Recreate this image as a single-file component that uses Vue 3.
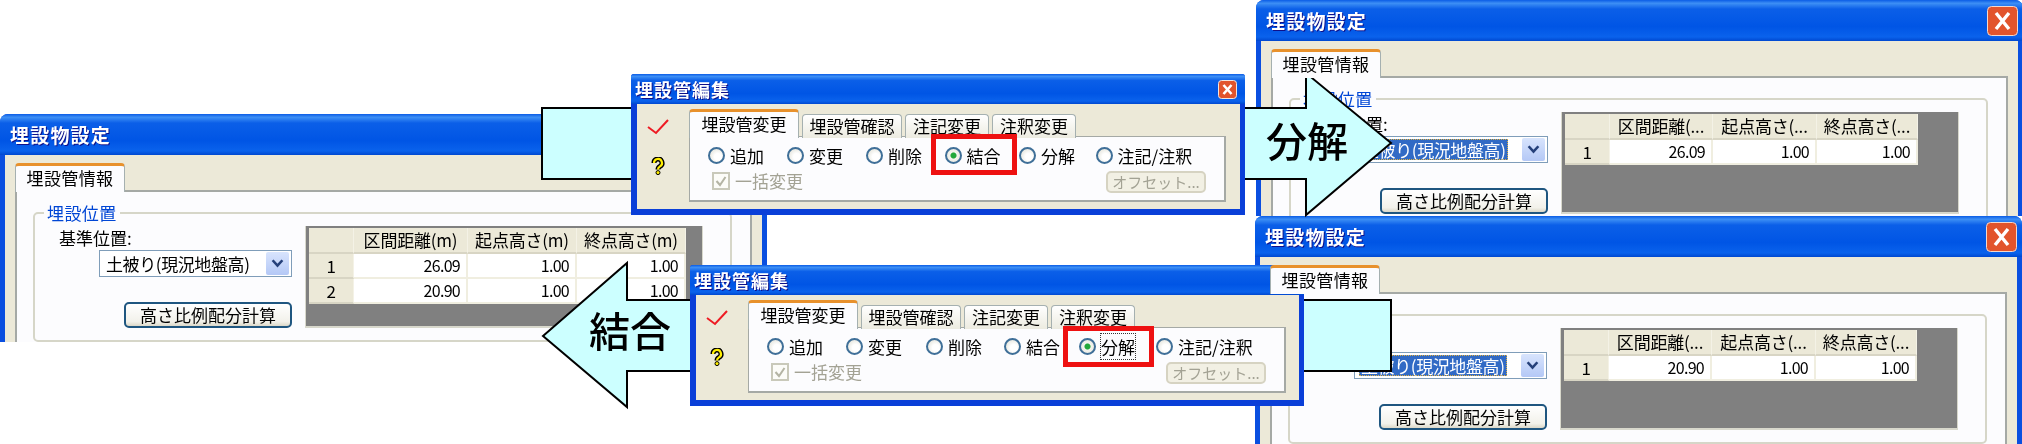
<script setup>
const headers = ['区間距離(m)', '起点高さ(m)', '終点高さ(m)']
const shortHeaders = ['区間距離(...', '起点高さ(...', '終点高さ(...']

const settingWindows = [
  {
    id: 'a', left: 0, top: 114, height: 228, close: false, selected: false,
    cols: '45px 114px 109px 109px', heads: headers,
    rows: [['1', '26.09', '1.00', '1.00'], ['2', '20.90', '1.00', '1.00']],
  },
  {
    id: 'c', left: 1256, top: 0, height: 216, close: true, selected: true,
    cols: '45px 103px 104px 101px', heads: shortHeaders,
    rows: [['1', '26.09', '1.00', '1.00']],
  },
  {
    id: 'd', left: 1255, top: 216, height: 228, close: true, selected: true,
    cols: '45px 103px 104px 101px', heads: shortHeaders,
    rows: [['1', '20.90', '1.00', '1.00']],
  },
]

const editWindows = [
  {
    id: 'e1', left: 631, top: 74, checked: '結合', focus: false,
    widths: [79, 79, 78.5, 74.5, 76.5, 110],
    box: { left: 300, top: 60, width: 86, height: 41 },
  },
  {
    id: 'e2', left: 690, top: 265, checked: '分解', focus: true,
    widths: [79, 80, 78, 75, 77, 110],
    box: { left: 373, top: 61, width: 91, height: 41 },
  },
]

const radios = ['追加', '変更', '削除', '結合', '分解', '注記/注釈']
const editTabs = ['埋設管確認', '注記変更', '注釈変更']
</script>

<template>
  <div class="desk">
    <section
      v-for="w in settingWindows"
      :key="w.id"
      class="win setting"
      :style="{ left: w.left + 'px', top: w.top + 'px', height: w.height + 'px' }"
    >
      <header class="title big">
        <span>埋設物設定</span>
        <svg v-if="w.close" class="close big-close" viewBox="0 0 31 30">
          <rect x="0.5" y="0.5" width="30" height="29" rx="4" fill="#e2542c" stroke="#f4d8cc" />
          <path d="M9 7 L22 23 M22 7 L9 23" stroke="#fff" stroke-width="3.4" fill="none" />
        </svg>
      </header>
      <div class="client">
        <div class="tabs">
          <div class="tab active">埋設管情報</div>
        </div>
        <div class="panel">
          <fieldset class="group">
            <legend>埋設位置</legend>
            <div class="group-body">
              <div class="left-col">
                <label class="base-label">基準位置:</label>
                <div class="combo">
                  <span class="combo-text" :class="{ selected: w.selected }">土被り(現況地盤高)</span>
                  <span class="combo-btn">
                    <svg viewBox="0 0 12 10" width="13" height="11">
                      <path d="M1.5 2 L6 7 L10.5 2" fill="none" stroke="#25407a" stroke-width="2.4" />
                    </svg>
                  </span>
                </div>
                <button class="btn calc">高さ比例配分計算</button>
              </div>
              <div class="grid">
                <div class="grid-row head" :style="{ gridTemplateColumns: w.cols }">
                  <div class="cell hd"></div>
                  <div v-for="h in w.heads" :key="h" class="cell hd">{{ h }}</div>
                </div>
                <div
                  v-for="r in w.rows"
                  :key="r[0]"
                  class="grid-row"
                  :style="{ gridTemplateColumns: w.cols }"
                >
                  <div class="cell hd">{{ r[0] }}</div>
                  <div v-for="(v, i) in r.slice(1)" :key="i" class="cell num">{{ v }}</div>
                </div>
              </div>
            </div>
          </fieldset>
        </div>
      </div>
    </section>

    <svg class="arrows" viewBox="0 0 2022 444" width="2022" height="444">
      <polygon
        points="543,336 627,263 627,300 1391,300 1391,371 627,371 627,407"
        fill="#ccffff"
        stroke="#000"
        stroke-width="2"
      />
      <polygon
        points="542,108 1306,108 1306,73 1391,143 1306,215 1306,179 542,179"
        fill="#ccffff"
        stroke="#000"
        stroke-width="2"
      />
      <text x="630" y="347" text-anchor="middle" class="arrow-text">結合</text>
      <text x="1307" y="157" text-anchor="middle" class="arrow-text">分解</text>
    </svg>

    <section
      v-for="e in editWindows"
      :key="e.id"
      class="win edit"
      :style="{ left: e.left + 'px', top: e.top + 'px' }"
    >
      <header class="title small">
        <span>埋設管編集</span>
        <svg class="close small-close" viewBox="0 0 19 19">
          <rect x="0.5" y="0.5" width="18" height="18" rx="3" fill="#e2542c" stroke="#f4e4dc" />
          <path d="M5.5 5 L13.5 14 M13.5 5 L5.5 14" stroke="#fff" stroke-width="2.6" fill="none" />
        </svg>
      </header>
      <div class="edit-client">
        <div class="side">
          <svg viewBox="0 0 22 16" width="22" height="16">
            <polyline points="1,8 9,14 21,1" fill="none" stroke="#ee1c24" stroke-width="2" />
          </svg>
          <svg viewBox="0 0 16 18" width="16" height="18">
            <path d="M4 6 a4 4 0 1 1 6 3.4 q-2 1.2 -2 3.2" fill="none" stroke="#000" stroke-width="5" />
            <path d="M4 6 a4 4 0 1 1 6 3.4 q-2 1.2 -2 3.2" fill="none" stroke="#ffee00" stroke-width="2.2" />
            <circle cx="8" cy="15.6" r="2" fill="#ffee00" stroke="#000" />
          </svg>
        </div>
        <div class="edit-main">
          <div class="tabs edit-tabs">
            <div class="tab active">埋設管変更</div>
            <div v-for="t in editTabs" :key="t" class="tab">{{ t }}</div>
          </div>
          <div class="panel edit-panel">
            <div class="radio-row">
              <div
                v-for="(r, i) in radios"
                :key="r"
                class="radio"
                :style="{ width: e.widths[i] + 'px' }"
              >
                <span class="dot" :class="{ on: r === e.checked }"></span>
                <span :class="{ focused: e.focus && r === e.checked }">{{ r }}</span>
              </div>
            </div>
            <div class="option-row">
              <div class="check">
                <span class="box">
                  <svg viewBox="0 0 14 14" width="14" height="14">
                    <polyline points="2.5,7 6,11 11.5,3" fill="none" stroke="#b4b4a4" stroke-width="2" />
                  </svg>
                </span>
                一括変更
              </div>
              <button class="btn offset" disabled>オフセット...</button>
            </div>
          </div>
        </div>
      </div>
      <div
        class="red-box"
        :style="{
          left: e.box.left + 'px',
          top: e.box.top + 'px',
          width: e.box.width + 'px',
          height: e.box.height + 'px',
        }"
      ></div>
    </section>
  </div>
</template>

<style scoped>
.desk {
  position: relative;
  width: 2022px;
  height: 444px;
  overflow: hidden;
  background: #fff;
  font-family: "Noto Sans CJK JP", "Liberation Sans", sans-serif;
  font-size: 17px;
  color: #000;
  filter: blur(0.35px);
}

.win {
  position: absolute;
  display: flex;
  flex-direction: column;
  box-sizing: border-box;
  overflow: hidden;
  border-radius: 8px 8px 0 0;
  background: #0a4fe0;
}
.setting {
  width: 767px;
}
.edit {
  width: 614px;
  height: 141px;
  background: #0a3fd8;
  border-radius: 3px 3px 0 0;
}

.title {
  display: flex;
  align-items: center;
  justify-content: space-between;
  box-sizing: border-box;
  flex: none;
  color: #fff;
  font-weight: 700;
  text-shadow: 1px 1px #0f1089;
  background: linear-gradient(#0a5ce6 0, #3d8ff5 8%, #0b5fe8 22%, #0055e5 65%, #0a62ec 90%, #0048d0 100%);
}
.title.big {
  height: 41px;
  padding: 0 5px 0 10px;
  font-size: 19px;
  letter-spacing: 1.2px;
}
.title.small {
  height: 30px;
  padding: 0 8px 0 4px;
  font-size: 18px;
  letter-spacing: 1px;
}
.big-close {
  width: 31px;
  height: 30px;
}
.small-close {
  width: 19px;
  height: 19px;
}

.client {
  flex: 1;
  margin: 0 5px;
  padding: 8px 10px 0;
  background: #ece9d8;
  overflow: hidden;
}

.tabs {
  display: flex;
  align-items: flex-end;
}
.tab {
  position: relative;
  box-sizing: border-box;
  height: 24px;
  margin-bottom: -2px;
  padding: 0 5px;
  border: 1px solid #a5b0b0;
  border-bottom: 0;
  border-radius: 4px 4px 0 0;
  background: linear-gradient(#fff, #ecebe0);
  line-height: 22px;
  text-align: center;
  letter-spacing: 0.4px;
  white-space: nowrap;
}
.tab.active {
  z-index: 1;
  width: 110px;
  height: 29px;
  padding: 0;
  border-top: 3px solid #e8912c;
  background: #fcfcfe;
  line-height: 24px;
}

.panel {
  box-sizing: border-box;
  height: 300px;
  padding: 0 20px 0 16px;
  border: 2px solid #a5a9a5;
  border-width: 2px 2px 0 2px;
  background: #fcfcfe;
}

.group {
  box-sizing: border-box;
  width: 699px;
  height: 141px;
  margin: 9px 0 0;
  padding: 0;
  border: 2px solid #d6d6c8;
  border-radius: 5px;
}
.group legend {
  margin-left: 9px;
  padding: 0 3px;
  color: #0046d5;
  font-size: 17px;
  line-height: 24px;
  letter-spacing: 0.4px;
}
.group-body {
  display: flex;
  margin-top: -2px;
}

.left-col {
  display: flex;
  flex-direction: column;
  align-items: flex-end;
  box-sizing: border-box;
  width: 270px;
  padding: 4px 13px 0 0;
}
.base-label {
  align-self: flex-start;
  margin-left: 24px;
  line-height: 22px;
}
.combo {
  display: flex;
  align-items: center;
  justify-content: space-between;
  box-sizing: border-box;
  width: 193px;
  height: 27px;
  margin-top: 1px;
  padding: 0 2px 0 4px;
  border: 1px solid #7f9db9;
  background: #fff;
  white-space: nowrap;
}
.combo-text {
  line-height: 21px;
  padding: 0 2px;
  letter-spacing: -0.4px;
}
.combo-text.selected {
  background: #316ac5;
  color: #fff;
  outline: 1px dotted #e0b040;
  outline-offset: -1px;
}
.combo-btn {
  display: flex;
  align-items: center;
  justify-content: center;
  flex: none;
  width: 23px;
  height: 23px;
  border-radius: 2px;
  background: linear-gradient(#d8e4fd, #b4c8f6);
}

.btn {
  font-family: inherit;
  font-size: 17px;
  color: #000;
  padding: 0;
  background: linear-gradient(#fff, #f2f1ea 80%, #dcd8c8);
  border: 2px solid #1f5680;
  border-radius: 5px;
}
.calc {
  width: 168px;
  height: 26px;
  margin-top: 25px;
  line-height: 20px;
}

.grid {
  box-sizing: border-box;
  width: 398px;
  height: 102px;
  margin-top: 3px;
  padding: 2px 0 0 3px;
  background: #808080;
  border: 1px solid #d8d8cc;
  border-width: 0 1px 2px 1px;
}
.grid-row {
  display: grid;
  height: 25px;
}
.grid-row.head {
  height: 26px;
}
.cell {
  box-sizing: border-box;
  overflow: hidden;
  white-space: nowrap;
  text-align: center;
  line-height: 23px;
  border-right: 1px solid #f4f2e6;
  border-bottom: 2px solid #d8d5c4;
}
.hd {
  background: #ece9d8;
  letter-spacing: -0.2px;
}
.num {
  padding-right: 6px;
  background: #fff;
  border-right: 2px solid #f0eee0;
  border-bottom: 2px solid #f0eee0;
  font-size: 16px;
  letter-spacing: -0.7px;
  text-align: right;
}

.arrows {
  position: absolute;
  left: 0;
  top: 0;
}
.arrow-text {
  font-family: "Noto Sans CJK JP", sans-serif;
  font-size: 41px;
  font-weight: 500;
  fill: #000;
}

.edit-client {
  display: flex;
  flex: none;
  box-sizing: border-box;
  height: 105px;
  margin: 0 5px 0 6px;
  background: #ece9d8;
}
.side {
  display: flex;
  flex-direction: column;
  align-items: center;
  flex: none;
  box-sizing: border-box;
  width: 52px;
  padding: 15px 10px 0 0;
  gap: 22px;
}
.edit-main {
  flex: 1;
  padding: 4px 14px 0 0;
}
.edit-tabs {
  height: 28px;
  gap: 3px;
}
.edit-tabs .tab {
  letter-spacing: 0;
  min-width: 84px;
}
.edit-tabs .tab:nth-child(2) {
  width: 100px;
}
.edit-panel {
  height: 66px;
  padding: 6px 18px 0 18px;
  border-width: 1px 2px 2px 1px;
}
.radio-row {
  display: flex;
  height: 24px;
  align-items: center;
}
.radio {
  display: flex;
  align-items: center;
  gap: 5px;
  flex: none;
  white-space: nowrap;
}
.dot {
  flex: none;
  box-sizing: border-box;
  width: 17px;
  height: 17px;
  border: 2px solid #3f6f98;
  border-radius: 50%;
  background: radial-gradient(circle at 60% 60%, #fff 30%, #dcdcd0 100%);
}
.dot.on {
  background: radial-gradient(circle, #22a83a 0, #22a83a 28%, #f4f4ee 38%, #e4e4da 100%);
}
.focused {
  outline: 1px dotted #333;
}
.option-row {
  display: flex;
  align-items: flex-start;
  justify-content: space-between;
  margin-top: 4px;
}
.check {
  display: flex;
  align-items: center;
  gap: 5px;
  margin-left: 4px;
  color: #a3a294;
  line-height: 20px;
}
.box {
  display: flex;
  align-items: center;
  justify-content: center;
  box-sizing: border-box;
  width: 18px;
  height: 18px;
  border: 2px solid #c9c9ba;
  background: #fcfcf8;
}
.offset {
  width: 100px;
  height: 22px;
  border: 2px solid #d6d3c2;
  background: #f2f0e4;
  color: #a3a294;
  font-size: 15px;
  line-height: 16px;
}
.red-box {
  position: absolute;
  box-sizing: border-box;
  border: 5px solid #ee1111;
}
</style>

<style>
html,
body {
  background: #fff;
  overflow: hidden;
}
</style>
